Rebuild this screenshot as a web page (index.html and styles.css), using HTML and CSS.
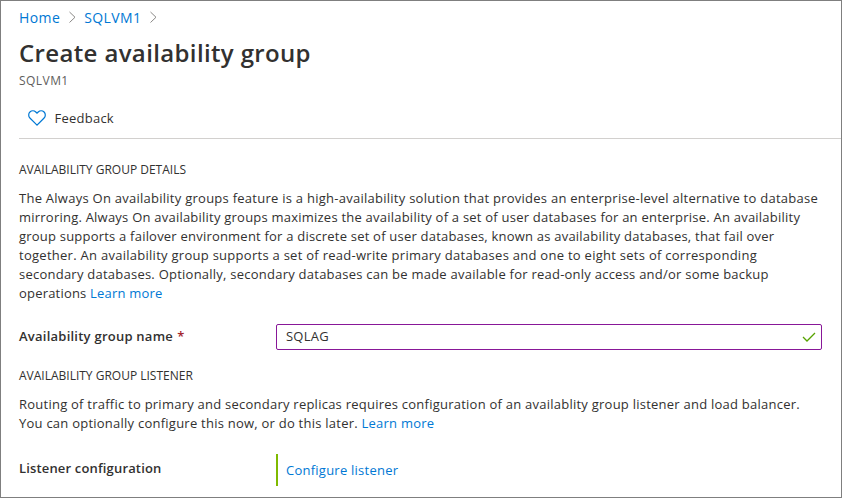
FILE: index.html
```
<!DOCTYPE html>
<html lang="en">
<head>
<meta charset="utf-8">
<title>Create availability group</title>
<link rel="stylesheet" href="styles.css">
</head>
<body>
<main class="blade">
  <nav class="breadcrumb">
    <a>Home</a>
    <svg class="chevron" viewBox="0 0 8 12"><path d="M1.500 1L7 6.250 1.500 11.500"/></svg>
    <a>SQLVM1</a>
    <svg class="chevron" viewBox="0 0 8 12"><path d="M1.500 1L7 6.250 1.500 11.500"/></svg>
  </nav>
  <h1>Create availability group</h1>
  <p class="subtitle">SQLVM1</p>
  <div class="toolbar">
    <svg class="heart" viewBox="0 0 18 16"><path d="M9 15.100L1.900 8C.3 6.400.3 3.500 1.900 2 3.500.4 6.200.4 7.800 2L9 3.200 10.200 2c1.600-1.600 4.300-1.600 5.900 0s1.600 4.400 0 6z"/></svg>
    <span>Feedback</span>
  </div>
  <h2>AVAILABILITY GROUP DETAILS</h2>
  <p class="text details">
    <span class="line">The Always On availability groups feature is a high-availability solution that provides an enterprise-level alternative to database</span>
    <span class="line">mirroring. Always On availability groups maximizes the availability of a set of user databases for an enterprise. An availability</span>
    <span class="line">group supports a failover environment for a discrete set of user databases, known as availability databases, that fail over</span>
    <span class="line">together. An availability group supports a set of read-write primary databases and one to eight sets of corresponding</span>
    <span class="line">secondary databases. Optionally, secondary databases can be made available for read-only access and/or some backup</span>
    <span class="line">operations <a>Learn more</a></span>
  </p>
  <div class="field name-field">
    <label>Availability group name <span class="required">*</span></label>
    <div class="input"><span>SQLAG</span>
      <svg class="check" viewBox="0 0 14 10"><path d="M1 5l4 4 8-8"/></svg>
    </div>
  </div>
  <h2>AVAILABILITY GROUP LISTENER</h2>
  <p class="text">
    <span class="line">Routing of traffic to primary and secondary replicas requires configuration of an availablity group listener and load balancer.</span>
    <span class="line">You can optionally configure this now, or do this later. <a>Learn more</a></span>
  </p>
  <div class="field listener-field">
    <label>Listener configuration</label>
    <div class="callout"><a>Configure listener</a></div>
  </div>
</main>
</body>
</html>
```

FILE: styles.css
```
* { box-sizing: border-box; }
body {
  margin: 0;
  font-family: "Open Sans", "Noto Sans", sans-serif;
  font-size: 13px;
  letter-spacing: 0.24px;
  color: #323130;
  background: #fff;
}
.blade {
  width: 842px;
  height: 498px;
  border: 1px solid #7f7f7f;
  padding: 6px 0 0 18px;
  overflow: hidden;
}
a { color: #0078d4; }
.breadcrumb {
  display: flex;
  align-items: center;
  height: 20px;
  font-size: 14px;
  letter-spacing: 0.4px;
}
.chevron {
  width: 8px;
  height: 12px;
  margin: 0 8px;
  fill: none;
  stroke: #8a8886;
}
h1 {
  margin: 9px 0 0;
  font-size: 24px;
  line-height: 34px;
  font-weight: 600;
  letter-spacing: 0.36px;
}
.subtitle {
  margin: 3px 0 0;
  font-size: 12px;
  line-height: 16px;
  letter-spacing: 0.45px;
  color: #605e5c;
}
.toolbar {
  display: flex;
  align-items: center;
  height: 42px;
  margin-top: 8px;
  padding-left: 8.5px;
  border-bottom: 1px solid #d2d0ce;
}
.heart {
  width: 18px;
  height: 16px;
  margin-right: 9px;
  fill: none;
  stroke: #0078d4;
  stroke-width: 1.2;
}
h2 {
  margin: 0;
  font-size: 12px;
  line-height: 16px;
  font-weight: 500;
  letter-spacing: 0;
}
.toolbar + h2 { margin-top: 23px; }
.text {
  margin: 11px 0 0;
  line-height: 19px;
}
.line {
  display: block;
  width: max-content;
  white-space: nowrap;
}
.details .line:nth-child(1) { letter-spacing: 0.258px; }
.details .line:nth-child(2) { letter-spacing: 0.226px; }
.details .line:nth-child(3) { letter-spacing: 0.212px; }
.details .line:nth-child(4) { letter-spacing: 0.272px; }
.details .line:nth-child(6) { letter-spacing: 0.2px; }
.field { display: flex; }
label {
  width: 257px;
  font-weight: 600;
}
.required {
  margin-left: 0.5px;
  color: #a4262c;
}
.name-field {
  margin: 21px 0 18px;
  line-height: 24px;
}
.input {
  display: flex;
  justify-content: space-between;
  width: 546px;
  height: 26px;
  padding: 0 5px 0 9px;
  border: 1px solid #881798;
  border-radius: 2px;
  line-height: 22px;
}
.check {
  width: 14px;
  height: 10px;
  margin-top: 7px;
  fill: none;
  stroke: #57a300;
  stroke-width: 1.3;
}
.listener-field { margin-top: 21px; }
.listener-field label {
  line-height: 28px;
  letter-spacing: 0.16px;
}
.callout {
  height: 32px;
  padding-left: 8px;
  border-left: 2px solid #7fba00;
  line-height: 32px;
}
```
